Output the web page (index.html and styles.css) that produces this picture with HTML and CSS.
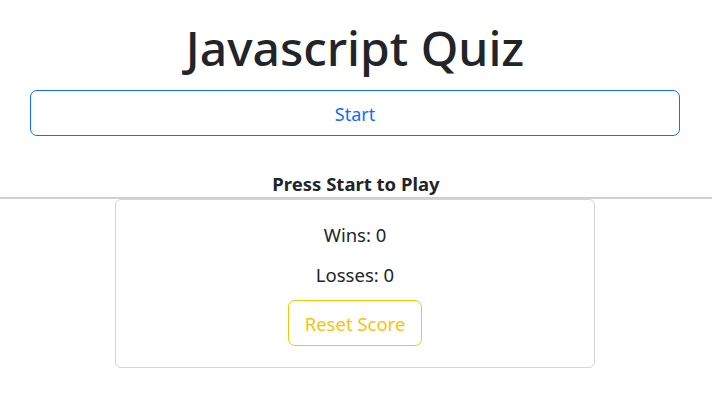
FILE: index.html
```html
<!DOCTYPE html>
<html>
<head>
<meta charset="utf-8">
<link rel="stylesheet" href="styles.css">
</head>
<body>
<header class="top">
  <h1 class="title">Javascript Quiz</h1>
  <button class="btn btn-start">Start</button>
</header>
<h2 class="prompt">Press Start to Play</h2>
<hr class="rule">
<div class="card-wrap">
  <section class="card">
    <p class="score">Wins: 0</p>
    <p class="score">Losses: 0</p>
    <button class="btn btn-reset">Reset Score</button>
  </section>
</div>
</body>
</html>
```
FILE: styles.css
```css
* { box-sizing: border-box; }
body {
  margin: 0;
  font-family: "Noto Sans", "Open Sans", sans-serif;
  color: #212529;
  background: #fff;
}
.top {
  display: flex;
  flex-direction: column;
  align-items: stretch;
  padding: 0 32px 0 30px;
}
.title {
  margin: 18px 0 0;
  font-size: 48px;
  font-weight: 500;
  line-height: 60px;
  text-align: center;
}
.btn {
  font-family: inherit;
  background: #fff;
  border-radius: 7px;
  cursor: pointer;
}
.btn-start {
  margin-top: 12px;
  height: 46px;
  padding-top: 3px;
  border: 1px solid #0d6efd;
  color: #0d6efd;
  font-size: 18px;
}
.prompt {
  margin: 36px 0 0;
  font-size: 18.5px;
  font-weight: 700;
  line-height: 24px;
  text-align: center;
}
.rule {
  margin: 1px 0 0;
  border: 0;
  border-top: 2px solid #d0d0d0;
}
.card-wrap {
  display: flex;
  justify-content: center;
  padding-right: 2px;
}
.card {
  width: 480px;
  border: 1px solid #d6d6d6;
  border-radius: 6px;
  padding: 23px 0 21px;
  display: flex;
  flex-direction: column;
  align-items: center;
}
.score {
  margin: 0 0 16px;
  font-size: 18.5px;
  line-height: 24px;
}
.score + .score { margin-bottom: 13px; }
.btn-reset {
  height: 46px;
  width: 134px;
  padding-top: 2px;
  border: 1px solid #ffc107;
  color: #ffc107;
  font-size: 18.5px;
}
```
